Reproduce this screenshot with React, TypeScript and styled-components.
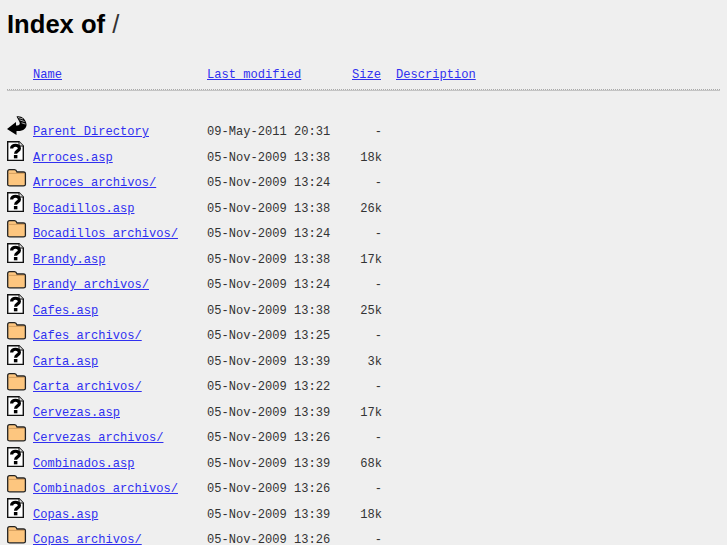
import React from 'react';
import styled, { createGlobalStyle } from 'styled-components';

type Kind = 'back' | 'file' | 'folder';

interface Entry {
  name: string;
  date: string;
  size: string;
  kind: Kind;
}

const entries: Entry[] = [
  { name: 'Parent Directory', date: '09-May-2011 20:31', size: '-', kind: 'back' },
  { name: 'Arroces.asp', date: '05-Nov-2009 13:38', size: '18k', kind: 'file' },
  { name: 'Arroces archivos/', date: '05-Nov-2009 13:24', size: '-', kind: 'folder' },
  { name: 'Bocadillos.asp', date: '05-Nov-2009 13:38', size: '26k', kind: 'file' },
  { name: 'Bocadillos archivos/', date: '05-Nov-2009 13:24', size: '-', kind: 'folder' },
  { name: 'Brandy.asp', date: '05-Nov-2009 13:38', size: '17k', kind: 'file' },
  { name: 'Brandy archivos/', date: '05-Nov-2009 13:24', size: '-', kind: 'folder' },
  { name: 'Cafes.asp', date: '05-Nov-2009 13:38', size: '25k', kind: 'file' },
  { name: 'Cafes archivos/', date: '05-Nov-2009 13:25', size: '-', kind: 'folder' },
  { name: 'Carta.asp', date: '05-Nov-2009 13:39', size: '3k', kind: 'file' },
  { name: 'Carta archivos/', date: '05-Nov-2009 13:22', size: '-', kind: 'folder' },
  { name: 'Cervezas.asp', date: '05-Nov-2009 13:39', size: '17k', kind: 'file' },
  { name: 'Cervezas archivos/', date: '05-Nov-2009 13:26', size: '-', kind: 'folder' },
  { name: 'Combinados.asp', date: '05-Nov-2009 13:39', size: '68k', kind: 'file' },
  { name: 'Combinados archivos/', date: '05-Nov-2009 13:26', size: '-', kind: 'folder' },
  { name: 'Copas.asp', date: '05-Nov-2009 13:39', size: '18k', kind: 'file' },
  { name: 'Copas archivos/', date: '05-Nov-2009 13:26', size: '-', kind: 'folder' },
];

const GlobalStyle = createGlobalStyle`
  html, body {
    margin: 0;
    height: 545px;
    overflow: hidden;
    background: #efefef;
  }
`;

const Page = styled.div`
  padding: 7px 7px 0;
  font-family: "Liberation Mono", monospace;
  font-size: 12.08px;
  color: #333;
`;

const Title = styled.h1`
  margin: 0;
  height: 37px;
  font-family: "Liberation Sans", Arial, sans-serif;
  font-size: 25.6px;
  line-height: 34px;
  font-weight: bold;
  color: #000;
`;

const Slash = styled.span`
  font-weight: normal;
  color: #333;
`;

const Row = styled.div`
  display: grid;
  grid-template-columns: 26px 174px 145px 44px 1fr;
  height: 25.47px;
  align-items: end;
  line-height: 14px;
`;

const HeaderRow = styled(Row)`
  height: 14px;
  margin-top: 24px;
`;

const Rule = styled.hr`
  margin: 7px 0 23px;
  border: 0;
  border-top: 1px dotted #aaa;
  border-bottom: 1px solid #c4c4c4;
  height: 0;
`;

const Link = styled.a`
  color: #3030f0;
  text-decoration: underline;
  white-space: pre;
`;

const Size = styled.span`
  justify-self: start;
  width: 30px;
  text-align: right;
`;

const IconBox = styled.span`
  display: block;
  width: 20px;
  height: 22px;
  margin-bottom: 3px;
`;

const BackIcon = () => (
  <svg width="20" height="22" viewBox="0 -2 20 22">
    <path d="M0 13 L9 6 L9 9.5 C12 10 13.5 8.5 12.5 6 L9.5 0.5 C14 -0.5 18.5 2.5 19.5 8 C20 12.5 16 15.5 9.5 15 L9.5 19 Z" fill="#000" />
    <path d="M11 1.5 L16 3 M12.5 3.8 L17.5 5.5 M14.5 6.8 L18.5 8" stroke="#bbb" strokeWidth="0.9" fill="none" />
  </svg>
);

const FileIcon = () => (
  <svg width="20" height="22" viewBox="0 1 20 22">
    <path d="M0.7 2.7 H12 L16.3 7 V21.4 H0.7 Z" fill="#fff" stroke="#111" strokeWidth="1.4" />
    <path d="M12 2.7 V7 H16.3" fill="#ddd" stroke="#111" strokeWidth="1" />
    <path d="M4.6 9.4 C4.6 5.2 12.4 5.2 12.4 9.4 C12.4 12 8.6 11.8 8.6 14.8" fill="none" stroke="#000" strokeWidth="3.2" />
    <rect x="6.9" y="16" width="3.5" height="3.3" fill="#000" />
  </svg>
);

const FolderIcon = () => (
  <svg width="20" height="22" viewBox="0 1 20 22">
    <path d="M0.7 9 V7.5 C0.7 6.5 1.7 5.6 2.7 5.6 H7.5 C8.5 5.6 9.5 6.5 10 8 H16.5 C17.5 8 18.4 9 18.4 10 V20.5 C18.4 21.4 17.5 21.8 16.5 21.8 H2.7 C1.7 21.8 0.7 21.4 0.7 20.5 Z" fill="#fdc67f" stroke="#222" strokeWidth="1.3" />
    <path d="M1.5 9.4 H17.6" stroke="#c99455" strokeWidth="0.8" fill="none" />
  </svg>
);

const icons: Record<Kind, React.FC> = {
  back: BackIcon,
  file: FileIcon,
  folder: FolderIcon,
};

const App: React.FC = () => {
  return (
    <Page>
      <GlobalStyle />
      <Title>Index of <Slash>/</Slash></Title>
      <HeaderRow>
        <span />
        <span><Link href="#">Name</Link></span>
        <span><Link href="#">Last modified</Link></span>
        <span><Link href="#">Size</Link></span>
        <span><Link href="#">Description</Link></span>
      </HeaderRow>
      <Rule />
      {entries.map((entry) => {
        const Icon = icons[entry.kind];
        return (
          <Row key={entry.name}>
            <IconBox><Icon /></IconBox>
            <span><Link href="#">{entry.name}</Link></span>
            <span>{entry.date}</span>
            <Size>{entry.size}</Size>
            <span />
          </Row>
        );
      })}
    </Page>
  );
};

export default App;
